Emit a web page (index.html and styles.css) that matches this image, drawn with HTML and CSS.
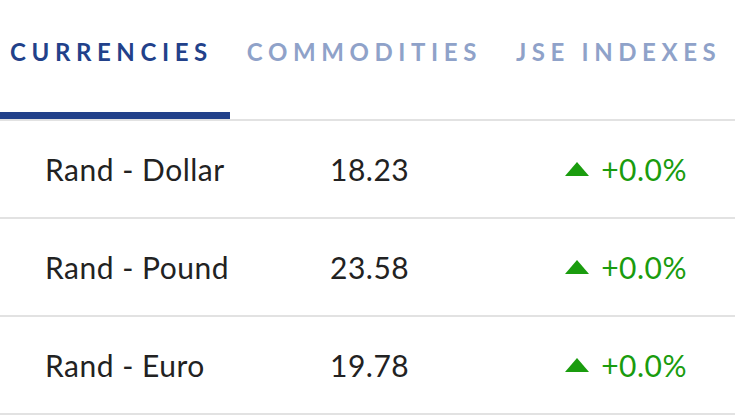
FILE: index.html
```html
<!DOCTYPE html>
<html lang="en">
<head>
    <meta charset="UTF-8">
    <meta name="viewport" content="width=device-width, initial-scale=1.0">
    <title>Markets</title>
    <link rel="stylesheet" href="styles.css">
</head>
<body>
    <div class="markets">
        <div class="tabs">
            <div class="tab active">Currencies</div>
            <div class="tab">Commodities</div>
            <div class="tab">JSE Indexes</div>
        </div>
        <div class="rows">
            <div class="row">
                <span class="name">Rand - Dollar</span>
                <span class="value">18.23</span>
                <span class="change"><span class="arrow"></span>+0.0%</span>
            </div>
            <div class="row">
                <span class="name">Rand - Pound</span>
                <span class="value">23.58</span>
                <span class="change"><span class="arrow"></span>+0.0%</span>
            </div>
            <div class="row">
                <span class="name">Rand - Euro</span>
                <span class="value">19.78</span>
                <span class="change"><span class="arrow"></span>+0.0%</span>
            </div>
        </div>
    </div>
</body>
</html>
```

FILE: styles.css
```css
body {
    margin: 0;
    background-color: white;
    font-family: Lato, "Open Sans", sans-serif;
    color: #222;
    overflow: hidden;
}
.markets {
    width: 735px;
}
.tabs {
    display: flex;
    height: 119px;
    border-bottom: 2px solid #e2e2e2;
    margin-left: -7px;
}
.tab {
    display: flex;
    align-items: flex-start;
    flex-shrink: 0;
    white-space: nowrap;
    padding: 37px 17px 0;
    font-size: 24px;
    font-weight: 700;
    letter-spacing: 5.6px;
    text-transform: uppercase;
    color: #8fa2c9;
    box-sizing: border-box;
    height: 119px;
}
.tab.active {
    color: #22418a;
    border-bottom: 7px solid #22418a;
}
.row {
    display: flex;
    align-items: center;
    height: 96px;
    border-bottom: 2px solid #e2e2e2;
    padding: 0 48px 0 45px;
    font-size: 30px;
    letter-spacing: 0.5px;
}
.name {
    width: 285px;
}
.value {
    flex: 1;
}
.change {
    display: flex;
    align-items: center;
    color: #1a9c0e;
}
.arrow {
    width: 0;
    height: 0;
    border-left: 12.5px solid transparent;
    border-right: 12.5px solid transparent;
    border-bottom: 14px solid #1a9c0e;
    margin-right: 12px;
}
```
